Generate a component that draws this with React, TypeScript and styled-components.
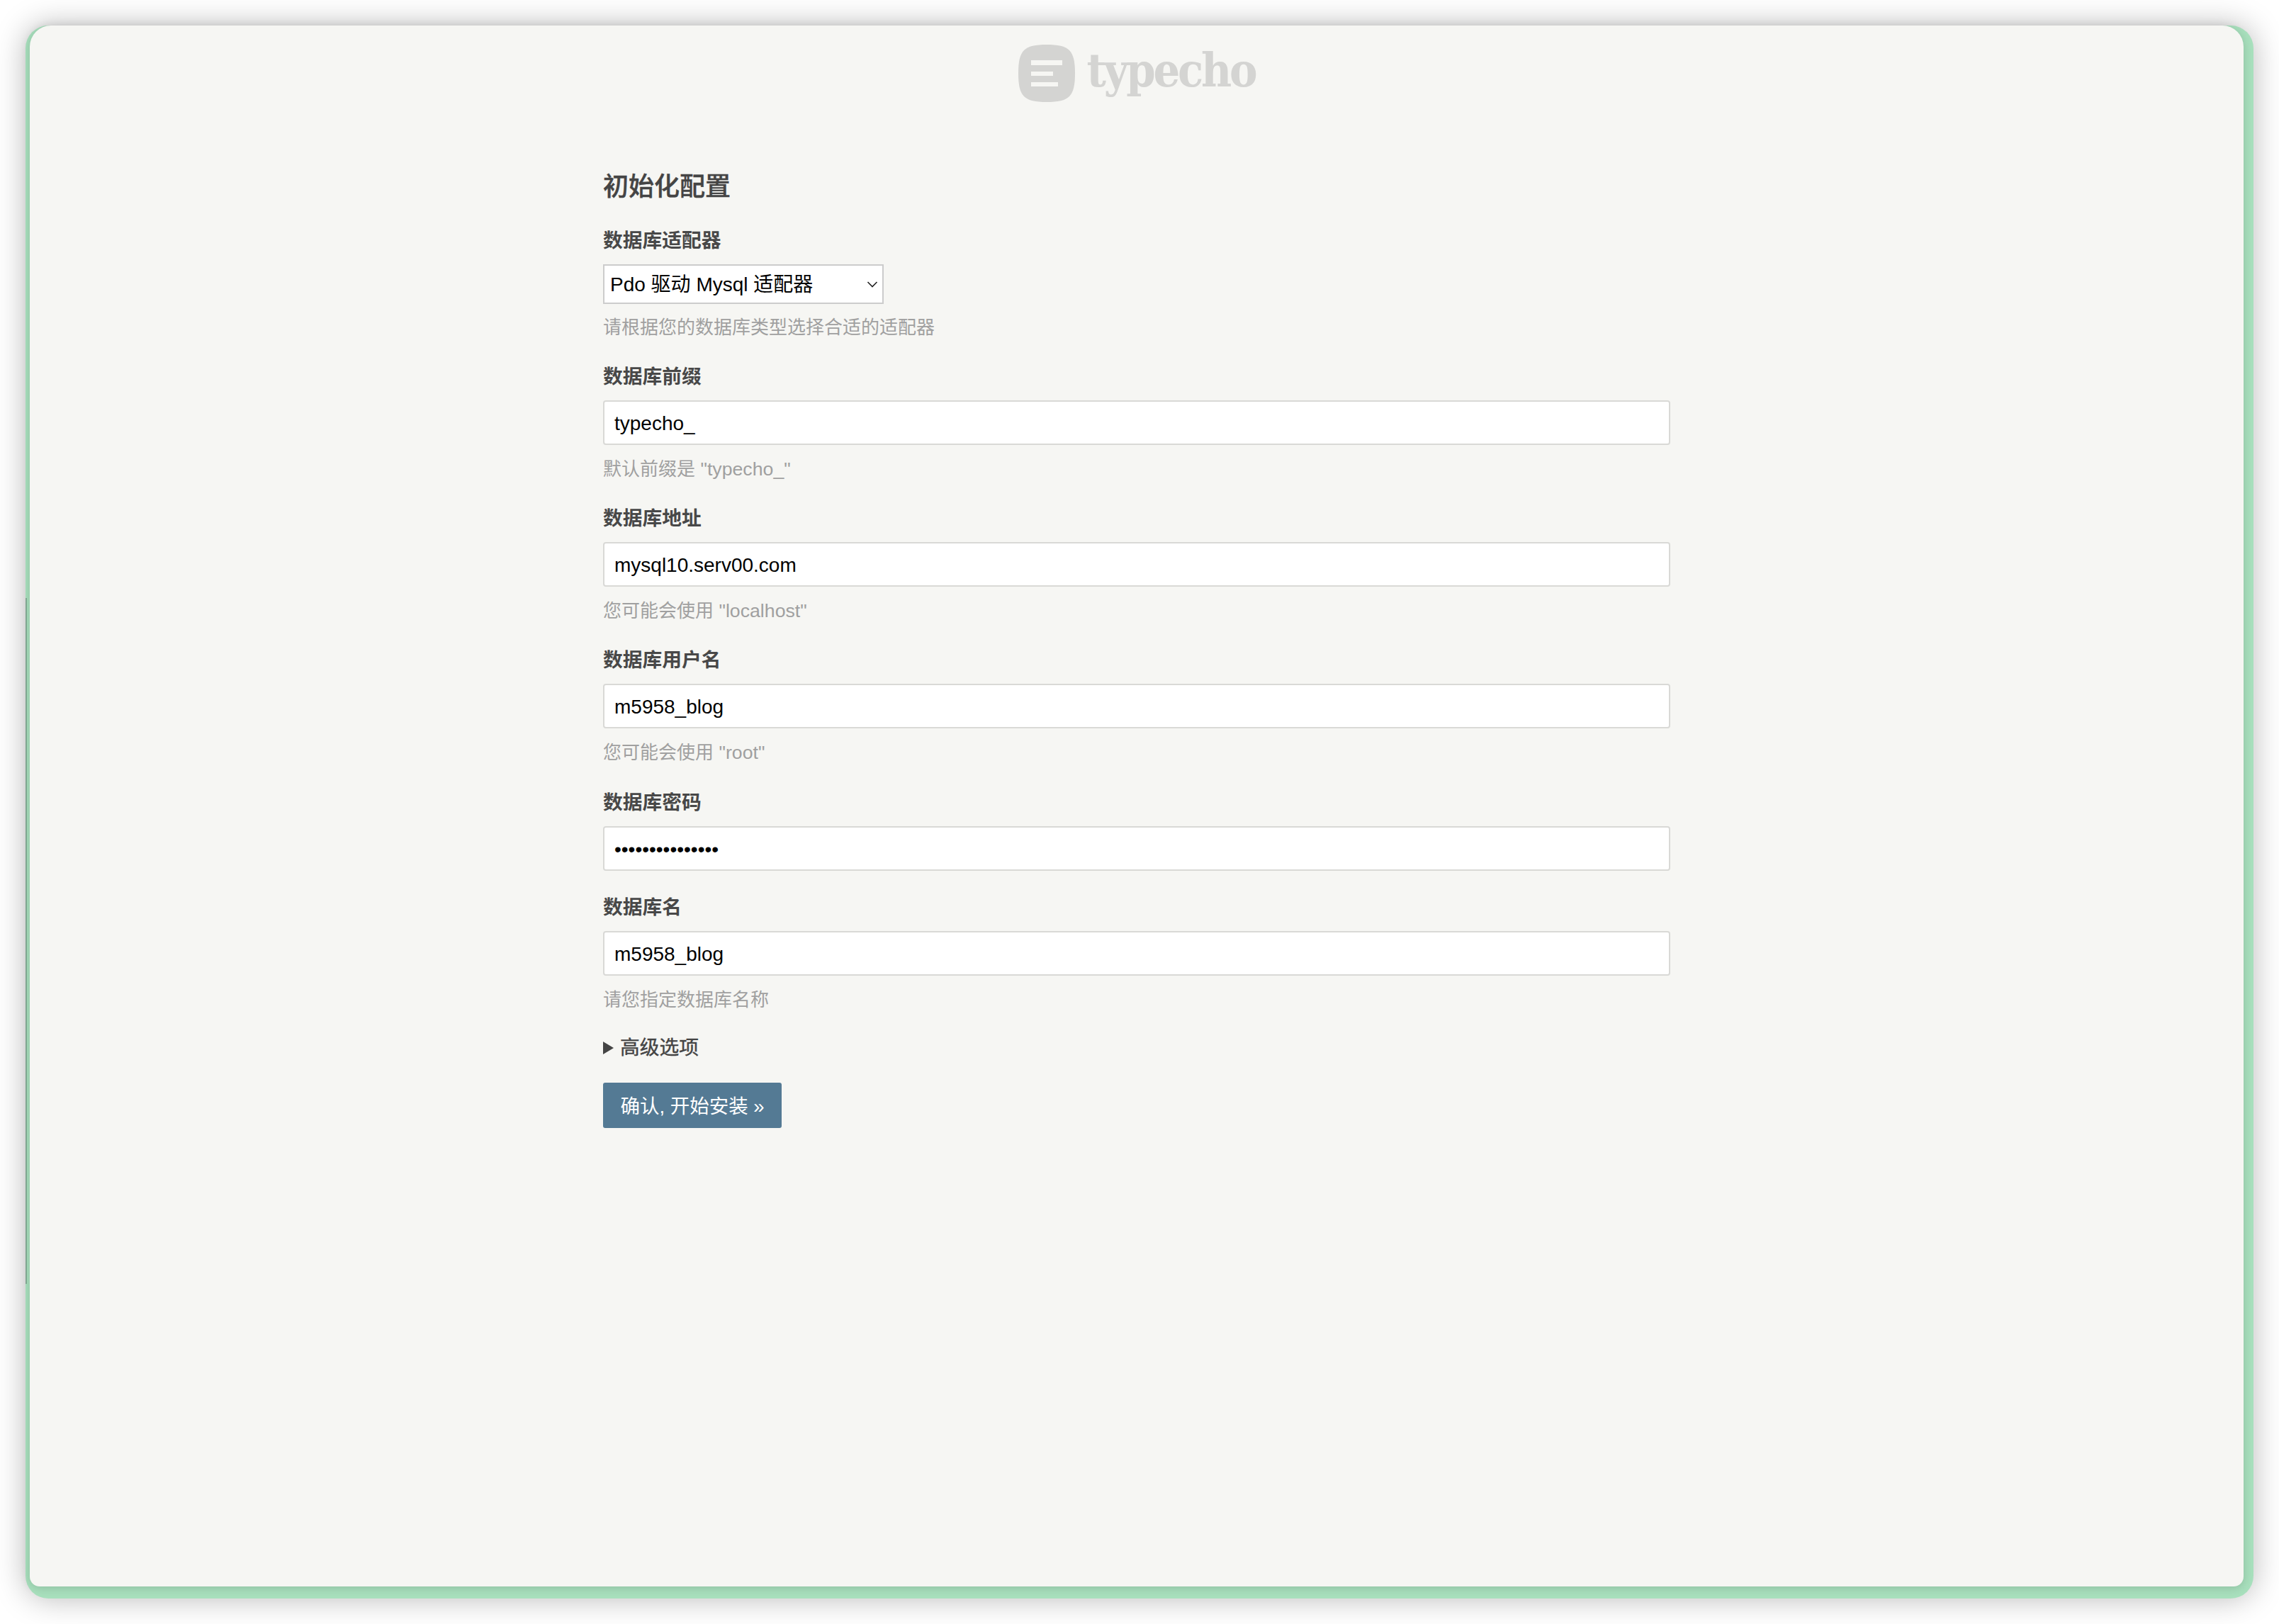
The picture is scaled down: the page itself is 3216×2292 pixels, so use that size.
import React from "react";
import styled, { createGlobalStyle } from "styled-components";

const FONT = `"Liberation Sans", "Noto Sans CJK SC", sans-serif`;

const Global = createGlobalStyle`
  html, body { margin: 0; padding: 0; background: #fff; }
  body { font-family: ${FONT}; color: #444; }
  #root { width: 3216px; height: 2292px; overflow: hidden; }
`;

const Desktop = styled.div`
  box-sizing: border-box;
  width: 3216px;
  height: 2292px;
  padding: 36px 36px 36px;
`;

const Win = styled.div`
  position: relative;
  box-sizing: border-box;
  height: 2220px;
  padding: 0 14px 17px 6px;
  background: #a8e0bd;
  border-radius: 32px;
  box-shadow: 0 0 44px rgba(0, 0, 0, 0.28);
`;

const EdgeMark = styled.div`
  position: absolute;
  left: 0;
  top: 808px;
  width: 2px;
  height: 968px;
  background: #7fa68f;
`;

const Page = styled.main`
  box-sizing: border-box;
  height: 100%;
  background: #f6f6f3;
  border-radius: 30px 30px 14px 14px;
  box-shadow: 0 2px 14px rgba(0, 0, 0, 0.16);
  padding-top: 27px;
  display: flex;
  flex-direction: column;
  align-items: center;
`;

const Brand = styled.div`
  display: flex;
  align-items: center;
  gap: 17px;
  height: 81px;
`;

const BrandName = styled.span`
  font-family: "DejaVu Serif Condensed", "DejaVu Serif", serif;
  font-stretch: condensed;
  font-weight: 700;
  font-size: 66px;
  line-height: 81px;
  letter-spacing: -3.2px;
  color: #d4d4d2;
  position: relative;
  top: -4px;
`;

const Form = styled.form`
  box-sizing: border-box;
  width: 1506px;
  margin-top: 100px;
  display: flex;
  flex-direction: column;
`;

const Title = styled.h2`
  margin: 0 0 39px;
  font-size: 36px;
  line-height: 40px;
  font-weight: 500;
  color: #444;
  -webkit-text-stroke: 0.4px #444;
`;

const Field = styled.div<{ $after: number }>`
  display: flex;
  flex-direction: column;
  margin-bottom: ${(p) => p.$after}px;
`;

const Label = styled.label`
  padding-top: 2px;
  font-size: 27.75px;
  line-height: 30px;
  font-weight: 700;
  color: #484848;
  margin-bottom: 18px;
`;

const TextBox = styled.input`
  box-sizing: border-box;
  width: 100%;
  height: 63px;
  padding: 2px 14px 0;
  border: 2px solid #d9d9d6;
  border-radius: 4px;
  background: #fff;
  color: #000;
  font-family: ${FONT};
  font-size: 28px;
  outline: none;
`;

const SelectWrap = styled.div`
  position: relative;
  width: 396px;
  height: 56px;
`;

const Select = styled.select`
  box-sizing: border-box;
  width: 100%;
  height: 100%;
  padding: 1px 0 0 8px;
  border: 2px solid #ccc;
  border-radius: 0;
  background: #fff;
  color: #000;
  font-family: ${FONT};
  font-size: 28px;
  appearance: none;
  outline: none;
`;

const Chevron = styled.svg`
  position: absolute;
  right: 8px;
  top: 24px;
  width: 16px;
  height: 9px;
  pointer-events: none;
`;

const Hint = styled.p<{ $top: number }>`
  margin: ${(p) => p.$top}px 0 0;
  font-size: 26px;
  line-height: 30px;
  color: #a0a0a0;
`;

const HintCode = styled.span`
  font-size: 26.7px;
`;

const Advanced = styled.details`
  font-size: 27.75px;
  line-height: 30px;
  color: #444;
  margin-bottom: 34px;
  -webkit-text-stroke: 0.4px #444;
`;

const AdvancedSummary = styled.summary`
  display: flex;
  align-items: center;
  gap: 9px;
  list-style: none;
`;

const Triangle = styled.svg`
  width: 15px;
  height: 18px;
  flex: none;
`;

const Submit = styled.button`
  box-sizing: border-box;
  align-self: flex-start;
  width: 252px;
  height: 64px;
  padding: 0 0 2px;
  border: 0;
  border-radius: 3px;
  background: #547a94;
  color: #fff;
  font-family: ${FONT};
  font-size: 27.5px;
`;

const Logo = () => (
  <svg width="80" height="81" viewBox="0 0 80 81" aria-hidden="true">
    <path
      d="M40 0C72 0 80 8 80 40.5C80 73 72 81 40 81C8 81 0 73 0 40.5C0 8 8 0 40 0Z"
      fill="#d4d4d2"
    />
    <rect x="18" y="22" width="44" height="7" fill="#f6f6f3" />
    <rect x="18" y="38" width="31" height="6" fill="#f6f6f3" />
    <rect x="18" y="53" width="38" height="6" fill="#f6f6f3" />
  </svg>
);

type Row = {
  label: string;
  value: string;
  hint?: string;
  code?: string;
  type?: string;
  after: number;
};

const rows: Row[] = [
  { label: "数据库前缀", value: "typecho_", hint: "默认前缀是", code: ' "typecho_"', after: 38 },
  { label: "数据库地址", value: "mysql10.serv00.com", hint: "您可能会使用", code: ' "localhost"', after: 38 },
  { label: "数据库用户名", value: "m5958_blog", hint: "您可能会使用", code: ' "root"', after: 39 },
  { label: "数据库密码", value: "aaaaaaaaaaaaaaa", type: "password", after: 35 },
  { label: "数据库名", value: "m5958_blog", hint: "请您指定数据库名称", after: 38 },
];

export default function App() {
  return (
    <Desktop>
      <Global />
      <Win>
        <EdgeMark />
        <Page>
          <Brand>
            <Logo />
            <BrandName>typecho</BrandName>
          </Brand>
          <Form onSubmit={(e) => e.preventDefault()}>
            <Title>初始化配置</Title>
            <Field $after={38}>
              <Label>数据库适配器</Label>
              <SelectWrap>
                <Select defaultValue="pdo">
                  <option value="pdo">Pdo 驱动 Mysql 适配器</option>
                </Select>
                <Chevron viewBox="0 0 16 9" aria-hidden="true">
                  <path d="M1.5 1l6.5 6.5L14.5 1" fill="none" stroke="#222" strokeWidth="1.6" />
                </Chevron>
              </SelectWrap>
              <Hint $top={18}>请根据您的数据库类型选择合适的适配器</Hint>
            </Field>
            {rows.map((r) => (
              <Field key={r.label} $after={r.after}>
                <Label>{r.label}</Label>
                <TextBox type={r.type ?? "text"} defaultValue={r.value} readOnly />
                {r.hint ? (
                  <Hint $top={19}>
                    {r.hint}
                    {r.code ? <HintCode>{r.code}</HintCode> : null}
                  </Hint>
                ) : null}
              </Field>
            ))}
            <Advanced>
              <AdvancedSummary>
                <Triangle viewBox="0 0 15 18" aria-hidden="true">
                  <path d="M0 0L15 9L0 18Z" fill="#444" />
                </Triangle>
                高级选项
              </AdvancedSummary>
            </Advanced>
            <Submit type="submit">确认, 开始安装 »</Submit>
          </Form>
        </Page>
      </Win>
    </Desktop>
  );
}
